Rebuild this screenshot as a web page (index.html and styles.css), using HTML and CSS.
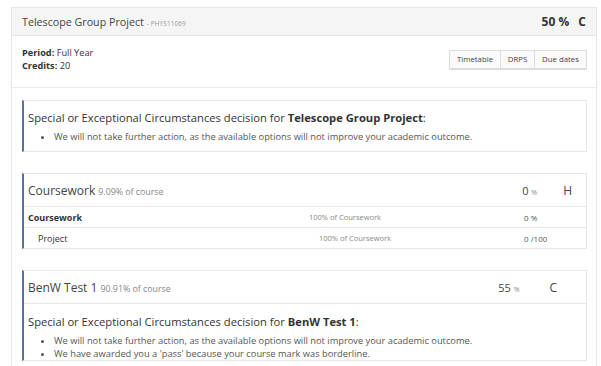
FILE: index.html
```html
<!DOCTYPE html>
<html lang="en">
  <head>
    <meta charset="UTF-8" />
    <title>Telescope Group Project</title>
    <link rel="stylesheet" href="styles.css">
  </head>
  <body>
    <div class="course">
      <div class="course-head">
        <div class="course-title">
          Telescope Group Project <span class="code">- PHYS11069</span>
        </div>
        <div class="course-mark">50 % <span class="grade">C</span></div>
      </div>

      <div class="course-info">
        <div class="meta">
          <div><b>Period:</b> Full Year</div>
          <div><b>Credits:</b> 20</div>
        </div>
        <div class="links">
          <button type="button" class="btn-timetable">Timetable</button>
          <button type="button" class="btn-drps">DRPS</button>
          <button type="button" class="btn-due">Due dates</button>
        </div>
      </div>

      <div class="course-body">
        <div class="panel notice">
          <div class="notice-title">
            Special or Exceptional Circumstances decision for
            <b>Telescope Group Project</b>:
          </div>
          <ul>
            <li>We will not take further action, as the available options will not improve your academic outcome.</li>
          </ul>
        </div>

        <div class="panel">
          <div class="panel-head">
            <div class="panel-title">Coursework <span class="weight">9.09% of course</span></div>
            <div class="score score-h"><span class="pct">0 <small>%</small></span><span class="letter">H</span></div>
          </div>
          <div class="row">
            <div class="cell-label"><b>Coursework</b></div>
            <div class="cell-mid">100% of Coursework</div>
            <div class="cell-val">0 %</div>
          </div>
          <div class="row sub">
            <div class="cell-label">Project</div>
            <div class="cell-mid">100% of Coursework</div>
            <div class="cell-val">0 /100</div>
          </div>
        </div>

        <div class="panel">
          <div class="panel-head">
            <div class="panel-title">BenW Test 1 <span class="weight">90.91% of course</span></div>
            <div class="score score-c"><span class="pct">55 <small>%</small></span><span class="letter">C</span></div>
          </div>
          <div class="panel-notice">
            <div class="notice-title">
              Special or Exceptional Circumstances decision for <b>BenW Test 1</b>:
            </div>
            <ul>
              <li>We will not take further action, as the available options will not improve your academic outcome.</li>
              <li>We have awarded you a 'pass' because your course mark was borderline.</li>
            </ul>
          </div>
        </div>
      </div>
    </div>
  </body>
</html>
```

FILE: styles.css
```css
body {
  margin: 0;
  font-family: "Open Sans", sans-serif;
  color: #333333;
  background-color: #ffffff;
  font-size: 9px;
  overflow: hidden;
}

.course {
  margin: 7px 4px 0 11px;
  border: 1px solid #e6e6e6;
  border-bottom: none;
  height: 359px;
  overflow: hidden;
}

.course-head {
  display: flex;
  justify-content: space-between;
  align-items: center;
  height: 27px;
  padding: 0 10px;
  background-color: #f5f5f5;
  border-bottom: 1px solid #e6e6e6;
}

.course-title {
  font-size: 10.7px;
  color: #444444;
}

.code {
  font-size: 6.3px;
  letter-spacing: 0.2px;
  color: #999999;
}

.course-mark {
  font-size: 12px;
  font-weight: 700;
  color: #333333;
}

.grade {
  margin-left: 6px;
}

.course-info {
  display: flex;
  justify-content: space-between;
  align-items: center;
  padding: 10px 9px 15px 10px;
  border-bottom: 1px solid #ececec;
  line-height: 13px;
}

.meta {
  font-size: 9.2px;
}

.links {
  display: flex;
  box-shadow: 0 1px 1px rgba(0, 0, 0, 0.15);
  border-radius: 2px;
}

.links button {
  font-family: "Open Sans", sans-serif;
  font-size: 7.8px;
  color: #444444;
  background-color: #fafafa;
  border: 1px solid #dddddd;
  border-left: none;
  height: 19px;
  padding: 0;
  text-align: center;
}

.links .btn-timetable {
  width: 52px;
  border-left: 1px solid #dddddd;
}

.links .btn-drps {
  width: 34px;
}

.links .btn-due {
  width: 52px;
}

.course-body {
  padding: 12px 9px 0 10px;
  display: flex;
  flex-direction: column;
  gap: 21px;
}

.panel {
  border: 1px solid #e8e8e8;
  border-left: 2px solid #5b6fa0;
}

.notice {
  padding: 9px 4px 8px;
}

.notice-title {
  font-size: 11.2px;
  color: #333333;
}

ul {
  margin: 5px 0 0;
  padding-left: 26px;
  color: #555555;
  font-size: 9.3px;
  line-height: 13px;
}

.panel-head {
  display: flex;
  justify-content: space-between;
  align-items: center;
  height: 32px;
  padding: 0 4px;
  border-bottom: 1px solid #e8e8e8;
}

.panel-title {
  font-size: 12px;
  color: #444444;
}

.weight {
  font-size: 8.8px;
  color: #888888;
}

.score {
  display: flex;
  align-items: baseline;
  font-size: 11px;
  color: #444444;
}

.score small {
  font-size: 7px;
  color: #888888;
}

.score-h {
  padding-right: 10px;
}

.score-h .letter {
  margin-left: 26px;
  font-size: 12px;
}

.score-c {
  padding-right: 25px;
}

.score-c .letter {
  margin-left: 30px;
  font-size: 12px;
}

.row {
  display: flex;
  align-items: center;
  height: 20px;
  padding-left: 4px;
  border-bottom: 1px solid #e8e8e8;
}

.row:last-child {
  border-bottom: none;
}

.cell-label {
  width: 281px;
  font-size: 9px;
}

.cell-mid {
  width: 215px;
  font-size: 7.5px;
  color: #888888;
}

.cell-val {
  font-size: 8px;
  color: #555555;
}

.sub .cell-label,
.sub .cell-mid {
  padding-left: 10px;
  box-sizing: border-box;
}

.panel-notice {
  padding: 10px 4px 0;
}
```
